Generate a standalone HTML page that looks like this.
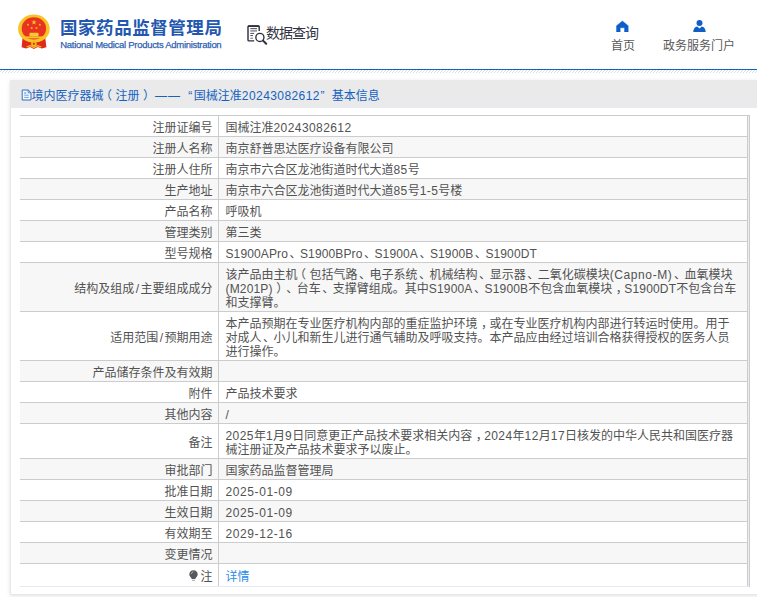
<!DOCTYPE html>
<html lang="zh-CN">
<head>
<meta charset="utf-8">
<title>国家药品监督管理局 数据查询</title>
<style>
*{box-sizing:border-box;margin:0;padding:0}
html,body{width:757px;height:597px;overflow:hidden;background:#fff}
body{position:relative;font-family:"Liberation Sans","Noto Sans CJK SC",sans-serif;font-size:12px;color:#525252;text-spacing-trim:space-all}
.abs{position:absolute}
#hdrline{left:0;top:69px;width:757px;height:1px;background:#0f62bd}
#hatch{left:0;top:70px;width:757px;height:3px;background:repeating-linear-gradient(135deg,#fff 0,#fff 1.4px,#dedede 1.4px,#dedede 2.12px)}
#logo-cn{left:60px;top:15px;font-size:17.5px;font-weight:bold;color:#2458b0;white-space:nowrap;line-height:26px;letter-spacing:0.55px}
#logo-en{left:60.3px;top:39.3px;font-size:9.5px;color:#2f5fb2;white-space:nowrap;line-height:12px;letter-spacing:-0.29px;-webkit-text-stroke:.25px #2f5fb2}
#dq{left:266px;top:23px;font-size:14px;color:#33333f;white-space:nowrap;line-height:20px;letter-spacing:-1px}
.nav{font-size:12px;color:#5a5a5a;white-space:nowrap;line-height:16px}
#panel{left:10px;top:80px;width:760px;height:515px;background:#fff;border:1px solid #e8e8e8;box-shadow:0 1px 4px rgba(0,0,0,.12)}
#phead{left:-1px;top:-1px;width:760px;height:28px;background:#eaeaea;border-bottom:1px solid #e6e8f3}
#ptitle{left:20.5px;top:7px;line-height:16px;color:#1562c2;white-space:nowrap}
.row{position:absolute;left:20px;width:728px;border-top:1px solid #ccc}
.row.g{background:#f7f7f7}
.row .l{position:absolute;left:0;top:0;bottom:0;width:198px;text-align:right;padding-right:5.5px;padding-top:3px;line-height:14px;display:flex;align-items:center;justify-content:flex-end;white-space:nowrap}
.row .r{position:absolute;left:198px;top:0;bottom:0;width:530px;border-left:1px solid #ccc;border-right:1px solid #ccc;padding-left:6.5px;padding-top:3px;display:flex;align-items:center;white-space:nowrap;line-height:14px}
.po{position:relative;left:-3.5px}.pc{position:relative;left:3.5px}.cm{position:relative;left:3.5px}.dn{position:relative;left:1.5px}.sl{padding:0 1.5px}.n{letter-spacing:.42px}.m{letter-spacing:.12px}.m2{letter-spacing:.17px}.d{letter-spacing:.6px}.c{letter-spacing:.6px}
a{color:#2a8be8;text-decoration:none}
</style>
</head>
<body>
<!-- header -->
<svg class="abs" style="left:16px;top:12px" width="36" height="38" viewBox="16 12 36 38">
  <path d="M22.6 37 L21.6 47.2 L26 48.4 L30 47 L33.9 48.9 L37.8 47 L41.8 48.4 L46.4 47.2 L45.2 37 Z" fill="#e02a1c"/>
  <ellipse cx="33.9" cy="28.7" rx="15.8" ry="14.1" fill="#f7c325"/>
  <ellipse cx="33.9" cy="28.4" rx="12.2" ry="11.2" fill="#e9321f"/>
  <path d="M23.6 40.2 Q33.9 45.6 44.2 40.2 L43.6 44.6 Q33.9 48.4 24.2 44.6 Z" fill="#e02a1c"/>
  <circle cx="33.9" cy="43.8" r="2.8" fill="#f3b81f"/>
  <circle cx="33.9" cy="43.8" r="1.1" fill="#e02a1c"/>
  <path d="M26.6 46.9 L30.4 45.6 L33.9 47.4 L37.4 45.6 L41.2 46.9" fill="none" stroke="#f3b81f" stroke-width="1.3"/>
  <polygon points="34,19.5 34.7,21.4 36.7,21.4 35.1,22.6 35.7,24.5 34,23.4 32.3,24.5 32.9,22.6 31.3,21.4 33.3,21.4" fill="#f5c62a"/>
  <circle cx="28" cy="24.7" r="1" fill="#f0b92a"/><circle cx="39.8" cy="24.7" r="1" fill="#f0b92a"/>
  <circle cx="31.7" cy="27.9" r="1" fill="#f0b92a"/><circle cx="36.5" cy="27.9" r="1" fill="#f0b92a"/>
  <path d="M30 32.8 H38 L39 34.6 H38.4 V36.4 H29.6 V34.6 H29 Z" fill="#f7c93a"/>
  <rect x="25" y="36.4" width="18" height="2" fill="#f5c02a"/>
</svg>
<div id="logo-cn" class="abs">国家药品监督管理局</div>
<div id="logo-en" class="abs">National Medical Products Administration</div>

<svg class="abs" style="left:246px;top:24px" width="22" height="22" viewBox="0 0 22 22">
  <path d="M13.2 7 V2.9 Q13.2 2 12.3 2 H2.9 Q2 2 2 2.9 V16 Q2 16.9 2.9 16.9 H8.2" fill="none" stroke="#2c2c3c" stroke-width="1.4"/>
  <path d="M2 2.2 H13.2" stroke="#2c2c3c" stroke-width="1.5"/>
  <path d="M4.3 4.6 H11 M4.3 9.4 H8.2 M4.3 11.6 H7" stroke="#3a3a48" stroke-width=".9"/>
  <path d="M4.3 6.8 H11" stroke="#9a9aa2" stroke-width="1.9"/><path d="M4.3 14.3 H7" stroke="#9a9aa2" stroke-width="1.4"/>
  <circle cx="13.9" cy="13.4" r="4.05" fill="#fff" stroke="#2c2c3c" stroke-width="1.35"/>
  <path d="M17 16.6 L20.2 19.8" stroke="#2c2c3c" stroke-width="2" stroke-linecap="round"/>
</svg>
<div id="dq" class="abs">数据查询</div>

<svg class="abs" style="left:616px;top:20px" width="13" height="12" viewBox="0 0 13 12">
  <path d="M6.4 0.9 L12.2 5.8 V12 H8.5 V7.8 H4.2 V12 H0.5 V5.8 Z" fill="#0c5ecb" stroke="#0c5ecb" stroke-width=".4" stroke-linejoin="round"/>
</svg>
<div class="abs nav" style="left:611px;top:38px">首页</div>
<svg class="abs" style="left:693px;top:20px" width="13" height="12" viewBox="0 0 13 12">
  <circle cx="6.5" cy="3" r="3" fill="#0f5fc6"/>
  <path d="M0.3 12 C0.3 8.2 2.6 6.6 4.2 6.4 L6.5 8.6 L8.8 6.4 C10.4 6.6 12.7 8.2 12.7 12 Z" fill="#0f5fc6"/>
</svg>
<div class="abs nav" style="left:663px;top:38px">政务服务门户</div>

<div id="hdrline" class="abs"></div>
<div id="hatch" class="abs"></div>

<!-- panel -->
<div id="panel" class="abs">
  <div id="phead" class="abs"></div>
  <svg class="abs" style="left:10px;top:8px" width="11" height="12" viewBox="0 0 11 12">
    <path d="M1.2 1 H7.2 L10 3.8 V11 H1.2 Z" fill="#f4f6fb" stroke="#1562c2" stroke-width=".9"/>
    <path d="M7.2 1 V3.8 H10" fill="none" stroke="#1562c2" stroke-width=".7"/>
    <path d="M3.2 4 H5.2" stroke="#1562c2" stroke-width=".8"/>
    <path d="M3.2 6.2 H7.8 M3.2 8.4 H7.8" stroke="#6d97d6" stroke-width=".9"/>
  </svg>
  <div id="ptitle" class="abs">境内医疗器械<span style="position:relative;left:-3.5px">（</span>注册<span style="position:relative;left:3.5px">）</span> <span style="letter-spacing:1.2px">——</span> <span style="margin-left:3.7px;margin-right:1.5px">“</span>国械注准<span class="n">20243082612</span><span style="margin-left:.5px;margin-right:4px">”</span> 基本信息</div>
</div>

<!-- table -->
<div class="row" style="top:115px;height:21px"><div class="l">注册证编号</div><div class="r">国械注准<span class="n">20243082612</span></div></div>
<div class="row g" style="top:136px;height:21px"><div class="l">注册人名称</div><div class="r">南京舒普思达医疗设备有限公司</div></div>
<div class="row" style="top:157px;height:21px"><div class="l">注册人住所</div><div class="r">南京市六合区龙池街道时代大道<span class="n">85</span>号</div></div>
<div class="row g" style="top:178px;height:21px"><div class="l">生产地址</div><div class="r">南京市六合区龙池街道时代大道<span class="n">85</span>号<span class="n">1-5</span>号楼</div></div>
<div class="row" style="top:199px;height:21px"><div class="l">产品名称</div><div class="r">呼吸机</div></div>
<div class="row g" style="top:220px;height:21px"><div class="l">管理类别</div><div class="r">第三类</div></div>
<div class="row" style="top:241px;height:21px"><div class="l">型号规格</div><div class="r"><span class="m">S1900APro</span><span class="dn">、</span><span class="m">S1900BPro</span><span class="dn">、</span><span class="m">S1900A</span><span class="dn">、</span><span class="m">S1900B</span><span class="dn">、</span><span class="m">S1900DT</span></div></div>
<div class="row g" style="top:262px;height:49px"><div class="l">结构及组成<span class="sl">/</span>主要组成成分</div><div class="r"><div>该产品由主机<span class="po">（</span>包括气路<span class="dn">、</span>电子系统<span class="dn">、</span>机械结构<span class="dn">、</span>显示器<span class="dn">、</span>二氧化碳模块<span class="c">(Capno-M)</span><span class="dn">、</span>血氧模块<br><span class="m2">(M201P)</span><span class="pc">）</span><span class="dn">、</span>台车<span class="dn">、</span>支撑臂组成。其中<span class="m2">S1900A</span><span class="dn">、</span><span class="m2">S1900B</span>不包含血氧模块<span class="cm">，</span><span class="m2">S1900DT</span>不包含台车<br>和支撑臂。</div></div></div>
<div class="row" style="top:311px;height:49px"><div class="l">适用范围<span class="sl">/</span>预期用途</div><div class="r"><div>本产品预期在专业医疗机构内部的重症监护环境<span class="cm">，</span>或在专业医疗机构内部进行转运时使用。用于<br>对成人<span class="dn">、</span>小儿和新生儿进行通气辅助及呼吸支持。本产品应由经过培训合格获得授权的医务人员<br>进行操作。</div></div></div>
<div class="row g" style="top:360px;height:21px"><div class="l">产品储存条件及有效期</div><div class="r"></div></div>
<div class="row" style="top:381px;height:21px"><div class="l">附件</div><div class="r">产品技术要求</div></div>
<div class="row g" style="top:402px;height:21px"><div class="l">其他内容</div><div class="r">/</div></div>
<div class="row" style="top:423px;height:35px"><div class="l">备注</div><div class="r"><div><span class="n">2025</span>年<span class="n">1</span>月<span class="n">9</span>日同意更正产品技术要求相关内容<span class="cm">，</span><span class="n">2024</span>年<span class="n">12</span>月<span class="n">17</span>日核发的中华人民共和国医疗器<br>械注册证及产品技术要求予以废止。</div></div></div>
<div class="row g" style="top:458px;height:21px"><div class="l">审批部门</div><div class="r">国家药品监督管理局</div></div>
<div class="row" style="top:479px;height:21px"><div class="l">批准日期</div><div class="r"><span class="d">2025-01-09</span></div></div>
<div class="row g" style="top:500px;height:21px"><div class="l">生效日期</div><div class="r"><span class="d">2025-01-09</span></div></div>
<div class="row" style="top:521px;height:21px"><div class="l">有效期至</div><div class="r"><span class="d">2029-12-16</span></div></div>
<div class="row g" style="top:542px;height:21px"><div class="l">变更情况</div><div class="r"></div></div>
<div class="row" style="top:563px;height:23px"><div class="l"><svg width="9" height="12" viewBox="0 0 9 12" style="margin-right:2.5px;position:relative;top:-1px"><path d="M4.5 0.3 C7 0.3 8.7 2.2 8.7 4.4 C8.7 6.4 7 7.2 6.2 8.9 H2.8 C2 7.2 0.3 6.4 0.3 4.4 C0.3 2.2 2 0.3 4.5 0.3 Z" fill="#58585c"/><path d="M3 10.3 H6" stroke="#9a9a9a" stroke-width=".9"/><path d="M2.2 4 C2.4 2.8 3.2 2 4.4 1.8" fill="none" stroke="#c9c9c9" stroke-width=".8"/></svg>注</div><div class="r"><a>详情</a></div></div>
<div class="abs" style="left:20px;top:586px;width:728px;height:1px;background:#e6e8f2"></div>
<div class="abs" style="left:748px;top:115px;width:1px;height:472px;background:#eaecf5"></div>
<div class="abs" style="left:749px;top:115px;width:1px;height:472px;background:#ccc"></div>
<div class="abs" style="left:747px;top:115px;width:3px;height:1px;background:#ccc"></div>
</body>
</html>
